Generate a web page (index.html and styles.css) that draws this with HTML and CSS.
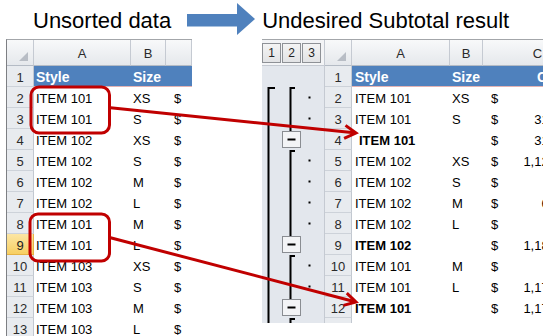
FILE: index.html
```html
<!DOCTYPE html>
<html>
<head>
<meta charset="utf-8">
<title>Subtotal</title>
<link rel="stylesheet" href="styles.css">
</head>
<body>
<div class="page">
  <header class="titles">
    <div class="title">Unsorted data</div>
    <svg class="big-arrow" width="68" height="32" viewBox="0 0 68 32"><polygon points="0,11 50,11 50,0 68,16 50,32 50,23.5 0,23.5" fill="#4f81bd"/></svg>
    <div class="title title-right">Undesired Subtotal result</div>
  </header>

  <div class="sheets">
    <div class="sheet sheet-left">
      <div class="ch corner"><svg width="9" height="9" viewBox="0 0 9 9"><polygon points="9,0 9,9 0,9" fill="#b8bdc5"/></svg></div>
      <div class="ch">A</div><div class="ch">B</div><div class="ch"></div>

      <div class="rh">1</div><div class="c hdr">Style</div><div class="c hdr">Size</div><div class="c hdr"></div>
      <div class="rh">2</div><div class="c">ITEM 101</div><div class="c">XS</div><div class="c money">$</div>
      <div class="rh">3</div><div class="c">ITEM 101</div><div class="c">S</div><div class="c money">$</div>
      <div class="rh">4</div><div class="c">ITEM 102</div><div class="c">XS</div><div class="c money">$</div>
      <div class="rh">5</div><div class="c">ITEM 102</div><div class="c">S</div><div class="c money">$</div>
      <div class="rh">6</div><div class="c">ITEM 102</div><div class="c">M</div><div class="c money">$</div>
      <div class="rh">7</div><div class="c">ITEM 102</div><div class="c">L</div><div class="c money">$</div>
      <div class="rh">8</div><div class="c">ITEM 101</div><div class="c">M</div><div class="c money">$</div>
      <div class="rh sel">9</div><div class="c">ITEM 101</div><div class="c">L</div><div class="c money">$</div>
      <div class="rh">10</div><div class="c">ITEM 103</div><div class="c">XS</div><div class="c money">$</div>
      <div class="rh">11</div><div class="c">ITEM 103</div><div class="c">S</div><div class="c money">$</div>
      <div class="rh">12</div><div class="c">ITEM 103</div><div class="c">M</div><div class="c money">$</div>
      <div class="rh">13</div><div class="c">ITEM 103</div><div class="c">L</div><div class="c money">$</div>
    </div>

    <div class="sheet sheet-right">
      <div class="gut-head"><span class="lvl">1</span><span class="lvl">2</span><span class="lvl">3</span></div>
      <div class="ch corner"><svg width="9" height="9" viewBox="0 0 9 9"><polygon points="9,0 9,9 0,9" fill="#b8bdc5"/></svg></div>
      <div class="ch">A</div><div class="ch">B</div><div class="ch">C</div>

      <div class="gut-body">
        <svg width="62" height="273" viewBox="0 0 62 273">
          <g fill="none" stroke="#000" stroke-width="2">
            <path d="M13 22 H6.5 V273"/>
            <path d="M33 22 H28.5 V65.5"/>
            <path d="M33 85 H28.5 V170.5"/>
            <path d="M33 190 H28.5 V233.5"/>
            <path d="M33 253 H28.5 V273"/>
          </g>
          <g fill="#f3f4f6" stroke="#8a8d92" stroke-width="1">
            <rect x="20.5" y="65.5" width="18" height="16"/>
            <rect x="20.5" y="170.5" width="18" height="16"/>
            <rect x="20.5" y="233.5" width="18" height="16"/>
          </g>
          <g stroke="#000" stroke-width="2">
            <line x1="25.5" y1="73.5" x2="33.5" y2="73.5"/>
            <line x1="25.5" y1="178.5" x2="33.5" y2="178.5"/>
            <line x1="25.5" y1="241.5" x2="33.5" y2="241.5"/>
          </g>
          <g fill="#000">
            <rect x="46.5" y="30.5" width="2" height="2"/>
            <rect x="46.5" y="51.5" width="2" height="2"/>
            <rect x="46.5" y="93.5" width="2" height="2"/>
            <rect x="46.5" y="114.5" width="2" height="2"/>
            <rect x="46.5" y="135.5" width="2" height="2"/>
            <rect x="46.5" y="156.5" width="2" height="2"/>
            <rect x="46.5" y="198.5" width="2" height="2"/>
            <rect x="46.5" y="219.5" width="2" height="2"/>
          </g>
        </svg>
      </div>

      <div class="rh">1</div><div class="c hdr ca">Style</div><div class="c hdr">Size</div><div class="c hdr cost">Cost</div>
      <div class="rh">2</div><div class="c ca">ITEM 101</div><div class="c">XS</div><div class="c money"><span>$</span><span></span></div>
      <div class="rh">3</div><div class="c ca">ITEM 101</div><div class="c">S</div><div class="c money"><span>$</span><span>317.50</span></div>
      <div class="rh">4</div><div class="c ca b indent">ITEM 101</div><div class="c"></div><div class="c money"><span>$</span><span>317.50</span></div>
      <div class="rh">5</div><div class="c ca">ITEM 102</div><div class="c">XS</div><div class="c money"><span>$</span><span>1,124.50</span></div>
      <div class="rh">6</div><div class="c ca">ITEM 102</div><div class="c">S</div><div class="c money"><span>$</span><span></span></div>
      <div class="rh">7</div><div class="c ca">ITEM 102</div><div class="c">M</div><div class="c money"><span>$</span><span>62.00</span></div>
      <div class="rh">8</div><div class="c ca">ITEM 102</div><div class="c">L</div><div class="c money"><span>$</span><span></span></div>
      <div class="rh">9</div><div class="c ca b">ITEM 102</div><div class="c"></div><div class="c money"><span>$</span><span>1,186.50</span></div>
      <div class="rh">10</div><div class="c ca">ITEM 101</div><div class="c">M</div><div class="c money"><span>$</span><span></span></div>
      <div class="rh">11</div><div class="c ca">ITEM 101</div><div class="c">L</div><div class="c money"><span>$</span><span>1,175.00</span></div>
      <div class="rh">12</div><div class="c ca b">ITEM 101</div><div class="c"></div><div class="c money"><span>$</span><span>1,175.00</span></div>
      <div class="rh">13</div><div class="c ca">ITEM 103</div><div class="c">XS</div><div class="c money"><span>$</span><span></span></div>
    </div>
  </div>

  <svg class="annotations" width="543" height="336" viewBox="0 0 543 336">
    <g fill="none" stroke="#c00000" stroke-width="3">
      <rect x="31" y="87" width="78.5" height="46" rx="8"/>
      <rect x="30" y="214" width="79.5" height="47" rx="8"/>
      <line x1="110.5" y1="107.8" x2="354" y2="132.8"/>
      <polyline points="345.5,125.4 356,133 344.1,138.3" stroke-linejoin="miter"/>
      <line x1="110.5" y1="237.7" x2="354" y2="301.5"/>
      <polyline points="346.8,293.2 356,302 343.5,305.4" stroke-linejoin="miter"/>
    </g>
  </svg>
</div>
</body>
</html>
```

FILE: styles.css
```css
* {
  box-sizing: border-box;
  margin: 0;
  padding: 0;
}

html,
body {
  width: 543px;
  height: 336px;
  overflow: hidden;
  background: #ffffff;
}

body {
  font-family: "Liberation Sans", Arial, sans-serif;
  color: #000000;
}

.page {
  position: relative;
  width: 543px;
  height: 336px;
  overflow: hidden;
}

/* ---------- titles ---------- */
.titles {
  display: flex;
  align-items: flex-start;
  height: 39px;
  padding-left: 33px;
}

.title {
  font-size: 22px;
  line-height: 22px;
  margin-top: 10px;
  white-space: nowrap;
}

.big-arrow {
  flex: none;
  margin-left: 16px;
  margin-top: 3px;
}

.title-right {
  margin-left: 7px;
}

/* ---------- sheets ---------- */
.sheets {
  display: flex;
  align-items: flex-start;
}

.sheet {
  display: grid;
  flex: none;
  grid-template-rows: 26px;
  grid-auto-rows: 21px;
  border-top: 1px solid #a3a6aa;
  font-size: 13px;
  overflow: hidden;
}

.sheet-left {
  margin-left: 6px;
  border-left: 1px solid #7d7f83;
  grid-template-columns: 27px 97px 35px 26px;
  height: 297px;
}

.sheet-right {
  margin-left: 70px;
  grid-template-columns: 63px 27px 98px 33px 110px;
  height: 284px;
}

/* column headers */
.ch {
  display: flex;
  align-items: center;
  justify-content: center;
  padding-top: 2px;
  background: linear-gradient(#f8f9fa, #e5e8ec);
  border-right: 1px solid #c5cad2;
  border-bottom: 1px solid #b4bbc5;
  color: #2a2a2a;
}

.corner {
  align-items: flex-end;
  justify-content: flex-end;
  padding: 0 5px 4px 0;
}

.corner svg {
  display: block;
}

/* row headers */
.rh {
  display: flex;
  align-items: center;
  justify-content: center;
  padding-top: 2px;
  background: #e8ebef;
  border-right: 1px solid #c2c8d0;
  border-bottom: 1px solid #cdd2d9;
  color: #2a2a2a;
}

.rh.sel {
  background: linear-gradient(#fce6a4, #f7cf62);
  border-bottom-color: #e5b346;
  border-right-color: #e5b346;
  color: #222222;
}

/* cells */
.c {
  display: flex;
  align-items: center;
  padding: 2px 0 0 2px;
  white-space: nowrap;
  overflow: hidden;
}

.ca {
  padding-left: 3px;
}

.hdr {
  background: #4f81bd;
  color: #ffffff;
  font-weight: bold;
  font-size: 14px;
  border-bottom: 1px solid #e3b3b3;
}

.b {
  font-weight: bold;
}

.indent {
  padding-left: 7px;
}

.money {
  justify-content: space-between;
  padding-left: 8px;
  padding-right: 19px;
}

.cost {
  padding-left: 54px;
}

/* outline gutter */
.gut-head {
  display: flex;
  align-items: flex-start;
  gap: 1px;
  padding-top: 3px;
  background: #f3f4f6;
  border-right: 1px solid #c5cad2;
  border-bottom: 1px solid #c5cad2;
}

.lvl {
  display: flex;
  align-items: center;
  justify-content: center;
  width: 19px;
  height: 20px;
  border: 1px solid #8e9196;
  background: linear-gradient(#f4f4f4, #e2e3e5);
  font-size: 12px;
  color: #222222;
}

.gut-body {
  grid-column: 1;
  grid-row: 2 / span 13;
  background: #e3e7ed;
  border-right: 1px solid #c5cad2;
}

.gut-body svg {
  display: block;
}

/* annotations overlay */
.annotations {
  position: absolute;
  left: 0;
  top: 0;
  pointer-events: none;
}
```
